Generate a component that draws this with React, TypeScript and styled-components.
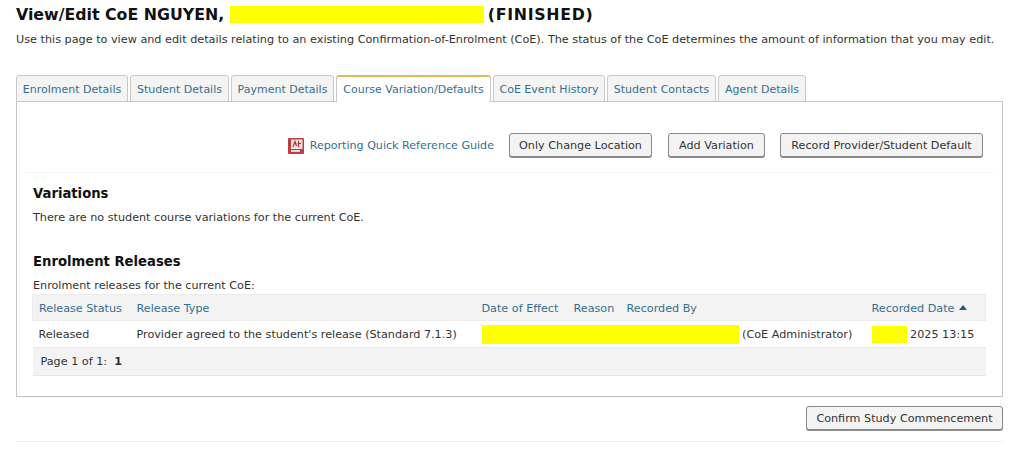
import React from 'react';
import styled, {createGlobalStyle} from 'styled-components';

const GlobalStyle = createGlobalStyle`
  html, body {
    margin: 0;
    padding: 0;
    background: #fff;
  }
  body {
    font-family: "DejaVu Sans", Verdana, sans-serif;
    font-size: 11.2px;
    color: #333;
  }
`;

const Page = styled.div`
  width: 1024px;
  height: 454px;
  box-sizing: border-box;
  padding: 4px 21px 0 16px;
  overflow: hidden;
`;

const Title = styled.h1`
  margin: 0;
  height: 20px;
  display: flex;
  align-items: center;
  font-size: 15.8px;
  font-weight: bold;
  color: #111;
  white-space: pre;
`;

const Status = styled.span`
  margin-left: 4px;
  letter-spacing: 0.7px;
`;

const Redacted = styled.span<{$w: number; $h: number}>`
  display: inline-block;
  flex: none;
  width: ${p => p.$w}px;
  height: ${p => p.$h}px;
  background: #ffff00;
`;

const Intro = styled.p`
  margin: 8px 0 0;
  font-size: 11.235px;
  line-height: 16px;
  white-space: nowrap;
`;

const Tabs = styled.div`
  display: flex;
  gap: 2px;
  margin-top: 27px;
  position: relative;
  z-index: 1;
`;

const Tab = styled.div<{$active?: boolean; $w: number}>`
  box-sizing: border-box;
  width: ${p => p.$w}px;
  height: 27px;
  display: flex;
  align-items: center;
  justify-content: center;
  padding-top: ${p => (p.$active ? 0 : 2)}px;
  font-size: 11px;
  white-space: nowrap;
  color: #33708f;
  background: ${p => (p.$active ? '#fff' : '#f4f4f4')};
  border: 1px solid #c8c8c8;
  border-top: ${p => (p.$active ? '2px solid #e8b860' : '1px solid #c8c8c8')};
  border-bottom: ${p => (p.$active ? 'none' : '1px solid #c8c8c8')};
  border-radius: 3px 3px 0 0;
`;

const Panel = styled.div`
  box-sizing: border-box;
  height: 296px;
  margin-top: -1px;
  padding: 0 15px;
  border: 1px solid #c4c4c4;
`;

const Actions = styled.div`
  height: 71px;
  margin: 0 -7px;
  padding: 31px 11px 0 0;
  box-sizing: border-box;
  display: flex;
  justify-content: flex-end;
  align-items: flex-start;
  border-bottom: 1px solid #f6f6f6;
`;

const GuideLink = styled.a`
  display: flex;
  align-items: center;
  gap: 6px;
  height: 23px;
  margin: 1px 15px 0 0;
  font-size: 11.1px;
  color: #33708f;
  white-space: nowrap;
`;

const Button = styled.button<{$w: number; $gap?: number}>`
  box-sizing: border-box;
  width: ${p => p.$w}px;
  height: 24px;
  margin-left: ${p => p.$gap ?? 0}px;
  padding: 0;
  font: inherit;
  color: #333;
  white-space: nowrap;
  background: #f3f3f3;
  border: 1px solid #8a8a8a;
  border-radius: 3px;
  box-shadow: 0 1px 0 #8a8a8a;
`;

const SectionTitle = styled.h2<{$top: number}>`
  margin: ${p => p.$top}px 0 0 1px;
  height: 18px;
  line-height: 18px;
  font-size: 13.2px;
  font-weight: bold;
  color: #111;
`;

const Text = styled.p<{$top: number}>`
  margin: ${p => p.$top}px 0 0 1px;
  line-height: 16px;
`;

const Table = styled.table`
  width: 953px;
  table-layout: fixed;
  border-collapse: collapse;
`;

const HeadRow = styled.tr`
  height: 26px;
  background: #f3f3f3;
  border: 1px solid #ececec;
`;

const Row = styled.tr`
  height: 27px;
  border-bottom: 1px solid #e6e6e6;
`;

const FootRow = styled.tr`
  height: 28px;
  background: #f3f3f3;
  border-bottom: 1px solid #e6e6e6;
`;

const Th = styled.th`
  padding: 2px 0 0 6px;
  text-align: left;
  font-weight: normal;
  color: #33708f;
  white-space: nowrap;
`;

const Td = styled.td`
  padding: 0 0 0 6px;
  white-space: nowrap;
`;

const Inline = styled.div`
  display: flex;
  align-items: center;
  white-space: pre;
`;

const Pager = styled(Td)`
  padding-left: 8px;
  white-space: pre;
`;

const SortArrow = styled.span`
  display: inline-block;
  width: 0;
  height: 0;
  margin-left: 5px;
  vertical-align: 2px;
  border-left: 4px solid transparent;
  border-right: 4px solid transparent;
  border-bottom: 5px solid #1f5f7f;
`;

const Footer = styled.div`
  display: flex;
  justify-content: flex-end;
  align-items: flex-start;
  height: 45px;
  padding-top: 9px;
  box-sizing: border-box;
  border-bottom: 1px solid #efefef;
`;

const tabs = [
  {label: 'Enrolment Details', w: 112},
  {label: 'Student Details', w: 99},
  {label: 'Payment Details', w: 103},
  {label: 'Course Variation/Defaults', w: 155, active: true},
  {label: 'CoE Event History', w: 112},
  {label: 'Student Contacts', w: 109},
  {label: 'Agent Details', w: 88},
];

const PdfIcon = () => (
  <svg width="16" height="16" viewBox="0 0 16 16">
    <rect x="0" y="0" width="16" height="16" rx="1" fill="#b8403f" />
    <rect x="3" y="1.5" width="11.5" height="9.5" fill="#f3e3e0" />
    <path d="M5 9 L7 3.5 L8.5 8 M10.5 3 L10.5 9 M9.5 5.5 L13 5.5" stroke="#b02a2e" strokeWidth="1.1" fill="none" />
    <rect x="3" y="12" width="9" height="2" fill="#e6d6d6" />
  </svg>
);

const App = () => (
  <>
    <GlobalStyle />
    <Page>
      <Title>
        View/Edit CoE NGUYEN, <Redacted $w={254} $h={17} /><Status>(FINISHED)</Status>
      </Title>
      <Intro>
        Use this page to view and edit details relating to an existing Confirmation-of-Enrolment (CoE). The status of the CoE determines the amount of information that you may edit.
      </Intro>
      <Tabs>
        {tabs.map(tab => (
          <Tab key={tab.label} $w={tab.w} $active={tab.active}>{tab.label}</Tab>
        ))}
      </Tabs>
      <Panel>
        <Actions>
          <GuideLink><PdfIcon />Reporting Quick Reference Guide</GuideLink>
          <Button $w={143}>Only Change Location</Button>
          <Button $w={97} $gap={16}>Add Variation</Button>
          <Button $w={203} $gap={15}>Record Provider/Student Default</Button>
        </Actions>
        <SectionTitle $top={12}>Variations</SectionTitle>
        <Text $top={7}>There are no student course variations for the current CoE.</Text>
        <SectionTitle $top={27}>Enrolment Releases</SectionTitle>
        <Text $top={7}>Enrolment releases for the current CoE:</Text>
        <Table>
          <colgroup>
            <col style={{width: 98}} />
            <col style={{width: 345}} />
            <col style={{width: 92}} />
            <col style={{width: 53}} />
            <col style={{width: 245}} />
            <col style={{width: 120}} />
          </colgroup>
          <thead>
            <HeadRow>
              <Th>Release Status</Th>
              <Th>Release Type</Th>
              <Th>Date of Effect</Th>
              <Th>Reason</Th>
              <Th>Recorded By</Th>
              <Th>Recorded Date<SortArrow /></Th>
            </HeadRow>
          </thead>
          <tbody>
            <Row>
              <Td>Released</Td>
              <Td>Provider agreed to the student's release (Standard 7.1.3)</Td>
              <Td colSpan={3}>
                <Inline><Redacted $w={257} $h={19} /> (CoE Administrator)</Inline>
              </Td>
              <Td>
                <Inline><Redacted $w={35} $h={17} /> 2025 13:15</Inline>
              </Td>
            </Row>
            <FootRow>
              <Pager colSpan={6}>{'Page 1 of 1:  '}<b>1</b></Pager>
            </FootRow>
          </tbody>
        </Table>
      </Panel>
      <Footer>
        <Button $w={197}>Confirm Study Commencement</Button>
      </Footer>
    </Page>
  </>
);

export default App;
